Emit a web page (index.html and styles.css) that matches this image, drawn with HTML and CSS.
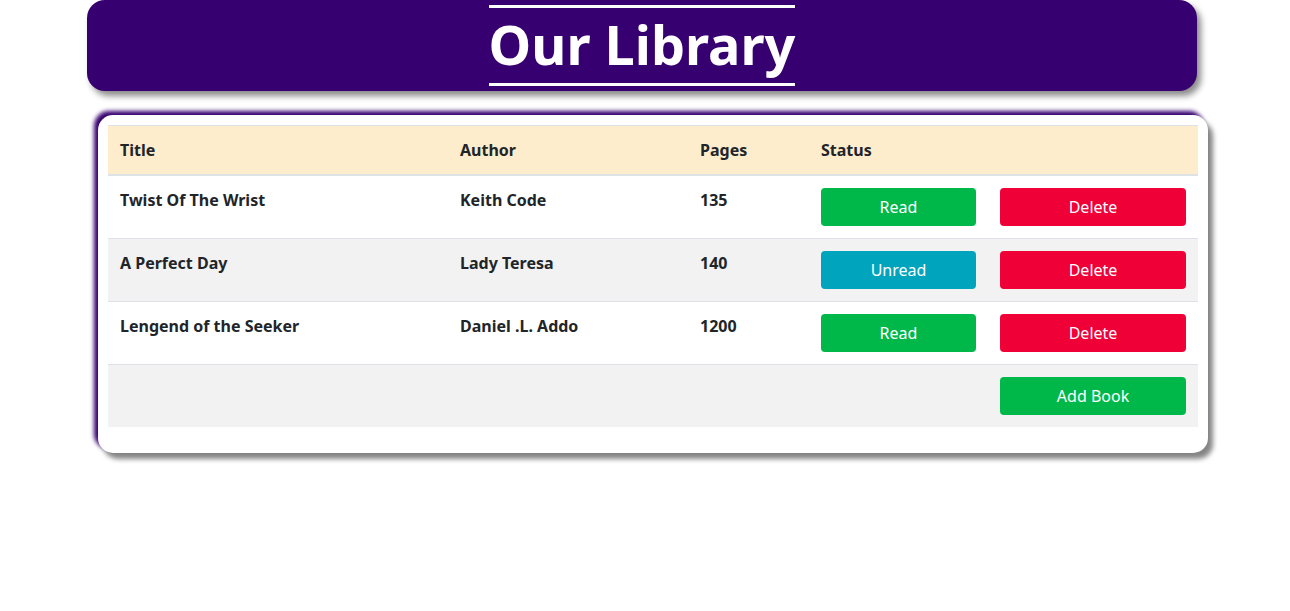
FILE: index.html
```html
<!DOCTYPE html>
<html>
<head>
<meta charset="utf-8">
<link rel="stylesheet" href="styles.css">
</head>
<body>
<header class="banner">
  <h1 class="banner-title">Our Library</h1>
</header>
<main class="card">
  <table class="books">
    <thead>
      <tr>
        <th class="c-title">Title</th>
        <th class="c-author">Author</th>
        <th class="c-pages">Pages</th>
        <th class="c-status">Status</th>
        <th class="c-action"></th>
      </tr>
    </thead>
    <tbody>
      <tr>
        <td>Twist Of The Wrist</td>
        <td>Keith Code</td>
        <td>135</td>
        <td><button class="btn btn-green">Read</button></td>
        <td><button class="btn btn-red">Delete</button></td>
      </tr>
      <tr class="alt">
        <td>A Perfect Day</td>
        <td>Lady Teresa</td>
        <td>140</td>
        <td><button class="btn btn-cyan">Unread</button></td>
        <td><button class="btn btn-red">Delete</button></td>
      </tr>
      <tr>
        <td>Lengend of the Seeker</td>
        <td>Daniel .L. Addo</td>
        <td>1200</td>
        <td><button class="btn btn-green">Read</button></td>
        <td><button class="btn btn-red">Delete</button></td>
      </tr>
      <tr class="alt">
        <td></td>
        <td></td>
        <td></td>
        <td></td>
        <td><button class="btn btn-green">Add Book</button></td>
      </tr>
    </tbody>
  </table>
</main>
</body>
</html>
```
FILE: styles.css
```css
* { box-sizing: border-box; }
html, body { min-height: 100%; }
body {
  margin: 0;
  min-height: 611px;
  font-family: "Noto Sans", "Open Sans", sans-serif;
  color: #212529;
  background: #fff;
}
.banner {
  margin: 0 0 0 87px;
  width: 1110px;
  height: 91px;
  background: #370070;
  border-radius: 18px;
  box-shadow: 4px 5px 6px #8c8c8c;
  display: flex;
  justify-content: center;
  align-items: flex-start;
  padding-top: 5px;
}
.banner-title {
  margin: 0;
  color: #fff;
  font-size: 54px;
  font-weight: 700;
  line-height: 72px;
  padding-bottom: 3px;
  border-top: 3px solid #fff;
  border-bottom: 3px solid #fff;
}
.card {
  display: block;
  margin: 24px 0 0 98px;
  width: 1110px;
  background: #fff;
  border-radius: 15px;
  padding: 10px 10px 26px 10px;
  box-shadow: -4px -4px 4px #370070, 5px 6px 5px #858585;
}
.books {
  width: 100%;
  border-collapse: collapse;
  font-size: 16px;
  font-weight: 700;
}
.books th, .books td {
  padding: 12px;
  text-align: left;
  vertical-align: top;
  line-height: 24px;
  border-top: 1px solid #dee2e6;
}
.books thead th {
  background: #fdedcc;
  border-bottom: 2px solid #dee2e6;
}
.c-title { width: 340px; }
.c-author { width: 240px; }
.c-pages { width: 121px; }
.c-status { width: 179px; }
.c-action { width: 210px; }
.alt td { background: #f2f2f2; }
.btn {
  display: block;
  width: 100%;
  height: 38px;
  border: none;
  border-radius: 4px;
  font-family: inherit;
  font-size: 16px;
  font-weight: 400;
  color: #fff;
  padding: 6px 12px;
  line-height: 24px;
}
.btn-green { background: #00b84a; }
.btn-red { background: #ef0037; }
.btn-cyan { background: #00a5bd; }
```
